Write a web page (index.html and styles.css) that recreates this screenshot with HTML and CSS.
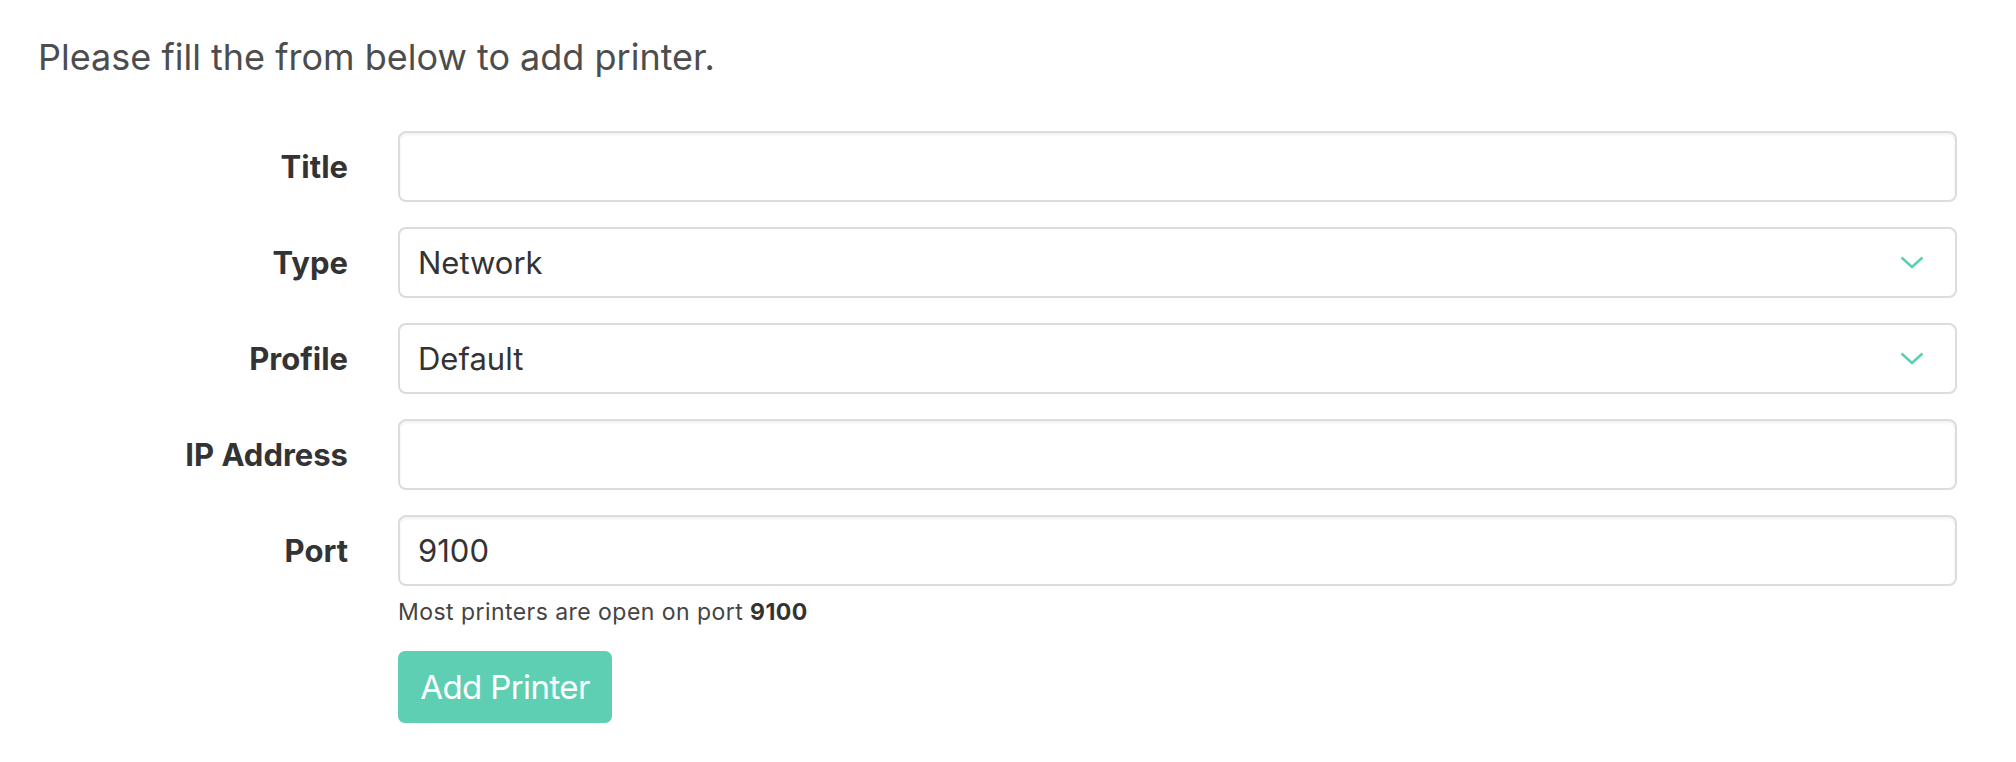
FILE: index.html
```html
<!DOCTYPE html>
<html lang="en">
<head>
<meta charset="utf-8">
<title>Add Printer</title>
<link rel="stylesheet" href="styles.css">
</head>
<body>
<main class="page">
  <p class="lead">Please fill the from below to add printer.</p>
  <form class="form">
    <label class="label" for="title">Title</label>
    <div class="field"><input class="control" id="title" type="text" value=""></div>

    <label class="label" for="type">Type</label>
    <div class="field">
      <div class="select">
        <span class="select-value">Network</span>
        <svg class="chevron" width="24" height="13" viewBox="0 0 24 13"><path d="M1.5 1.5 L12 11 L22.5 1.5" fill="none" stroke="#5ecfb1" stroke-width="2.6"/></svg>
      </div>
    </div>

    <label class="label" for="profile">Profile</label>
    <div class="field">
      <div class="select">
        <span class="select-value">Default</span>
        <svg class="chevron" width="24" height="13" viewBox="0 0 24 13"><path d="M1.5 1.5 L12 11 L22.5 1.5" fill="none" stroke="#5ecfb1" stroke-width="2.6"/></svg>
      </div>
    </div>

    <label class="label" for="ip">IP Address</label>
    <div class="field"><input class="control" id="ip" type="text" value=""></div>

    <label class="label" for="port">Port</label>
    <div class="field">
      <input class="control" id="port" type="text" value="9100">
      <small class="help">Most printers are open on port <b>9100</b></small>
      <button class="btn" type="button">Add Printer</button>
    </div>
  </form>
</main>
</body>
</html>
```

FILE: styles.css
```css
* { box-sizing: border-box; }
html, body { margin: 0; padding: 0; background: #ffffff; }
body {
  font-family: Inter, "Noto Sans", "Liberation Sans", sans-serif;
  color: #333333;
}
.page {
  padding: 35px 59px 0 38px;
}
.lead {
  margin: 0;
  font-size: 36px;
  line-height: 44px;
  color: #4d4d4d;
  font-weight: 400;
}
.form {
  margin-top: 52px;
  display: grid;
  grid-template-columns: 310px 1fr;
  column-gap: 50px;
  row-gap: 25px;
  align-items: start;
}
.label {
  height: 71px;
  display: flex;
  align-items: center;
  justify-content: flex-end;
  font-size: 31px;
  font-weight: 700;
  color: #333333;
}
.field {
  display: flex;
  flex-direction: column;
  align-items: flex-start;
}
.control, .select {
  width: 100%;
  height: 71px;
  border: 2px solid #dcdcdc;
  border-radius: 8px;
  background: #ffffff;
  box-shadow: inset 0 2px 3px rgba(0, 0, 0, 0.06);
  padding: 0 18px;
  font-family: Inter, "Noto Sans", "Liberation Sans", sans-serif;
  font-size: 31px;
  color: #333333;
  outline: none;
}
.select {
  display: flex;
  align-items: center;
  justify-content: space-between;
  padding-right: 31px;
  box-shadow: none;
}
.select-value { line-height: 1; }
.chevron { display: block; }
.help {
  margin-top: 11px;
  font-size: 23px;
  line-height: 30px;
  letter-spacing: 0.45px;
  color: #444444;
}
.help b { font-weight: 700; color: #333333; }
.btn {
  margin-top: 24px;
  height: 72px;
  width: 214px;
  border: none;
  border-radius: 7px;
  background: #5ecfb3;
  color: #ffffff;
  font-family: Inter, "Noto Sans", "Liberation Sans", sans-serif;
  font-size: 33px;
  letter-spacing: -0.6px;
  padding: 0;
}
```
